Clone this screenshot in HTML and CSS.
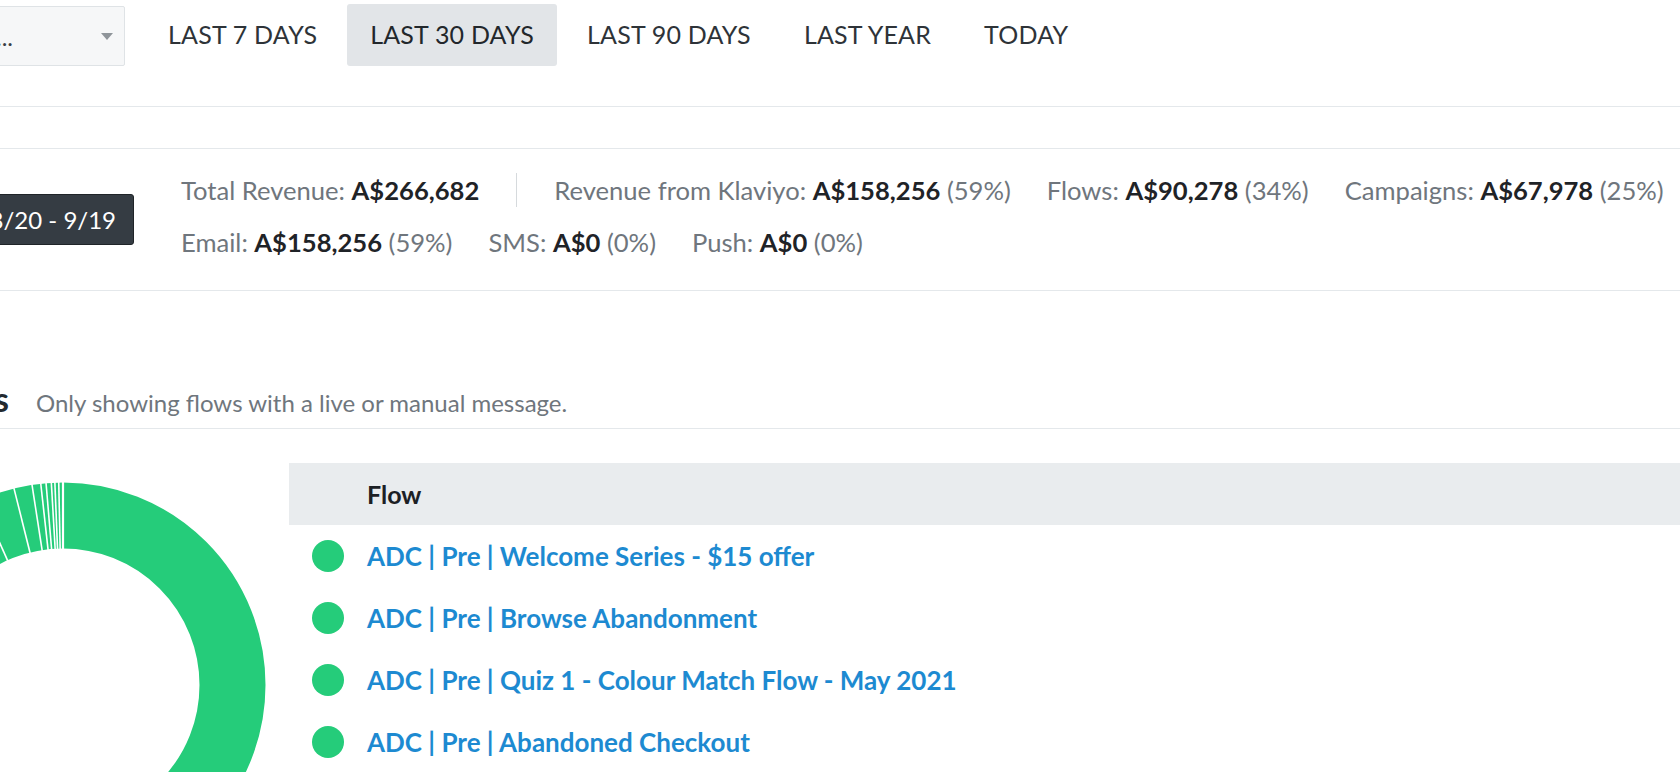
FILE: index.html
```html
<!DOCTYPE html>
<html lang="en">
<head>
<meta charset="utf-8">
<title>Flows overview</title>
<link rel="stylesheet" href="styles.css">
</head>
<body>
<div class="page">
  <header class="toolbar">
    <div class="select">
      <div class="select-label"><span>Overview by Channel...</span></div>
      <span class="caret"></span>
    </div>
    <nav class="tabs">
      <a class="tab">LAST 7 DAYS</a>
      <a class="tab active">LAST 30 DAYS</a>
      <a class="tab">LAST 90 DAYS</a>
      <a class="tab">LAST YEAR</a>
      <a class="tab">TODAY</a>
    </nav>
  </header>

  <section class="stats">
    <div class="stats-left">
      <div class="tip">8/20 - 9/19</div>
    </div>
    <div class="stats-body">
      <div class="stats-row">
        <span class="stat">Total Revenue: <b>A$266,682</b></span>
        <span class="sep"></span>
        <span class="stat">Revenue from Klaviyo: <b>A$158,256</b> (59%)</span>
        <span class="stat">Flows: <b>A$90,278</b> (34%)</span>
        <span class="stat">Campaigns: <b>A$67,978</b> (25%)</span>
      </div>
      <div class="stats-row">
        <span class="stat">Email: <b>A$158,256</b> (59%)</span>
        <span class="stat">SMS: <b>A$0</b> (0%)</span>
        <span class="stat">Push: <b>A$0</b> (0%)</span>
      </div>
    </div>
  </section>

  <section class="heading-row">
    <div class="heading-left"><h2 class="heading">Flows</h2></div>
    <p class="subtitle">Only showing flows with a live or manual message.</p>
  </section>

  <section class="flows">
    <div class="chart">
      <svg class="donut" width="410" height="410" viewBox="0 0 410 410">
        <circle cx="205" cy="205" r="169.5" fill="none" stroke="#25cc7a" stroke-width="66"/>
        <g stroke="#ffffff" stroke-width="1.6">
          <line x1="205" y1="70" x2="205" y2="0" stroke-width="2.2"/>
          <line x1="205" y1="70" x2="205" y2="0" transform="rotate(-1.2 205 205)"/>
          <line x1="205" y1="70" x2="205" y2="0" transform="rotate(-2.3 205 205)"/>
          <line x1="205" y1="70" x2="205" y2="0" transform="rotate(-3.3 205 205)"/>
          <line x1="205" y1="70" x2="205" y2="0" transform="rotate(-4.8 205 205)"/>
          <line x1="205" y1="70" x2="205" y2="0" transform="rotate(-6.3 205 205)"/>
          <line x1="205" y1="70" x2="205" y2="0" transform="rotate(-8.8 205 205)"/>
          <line x1="205" y1="70" x2="205" y2="0" transform="rotate(-14 205 205)"/>
          <line x1="205" y1="70" x2="205" y2="0" transform="rotate(-24 205 205)"/>
          <line x1="205" y1="70" x2="205" y2="0" transform="rotate(-45 205 205)"/>
          <line x1="205" y1="70" x2="205" y2="0" transform="rotate(-90 205 205)"/>
          <line x1="205" y1="70" x2="205" y2="0" transform="rotate(-150 205 205)"/>
        </g>
      </svg>
    </div>
    <div class="table">
      <div class="thead"><span class="th">Flow</span></div>
      <div class="trow"><span class="dot"></span><a class="flow-link">ADC | Pre | Welcome Series - $15 offer</a></div>
      <div class="trow"><span class="dot"></span><a class="flow-link">ADC | Pre | Browse Abandonment</a></div>
      <div class="trow"><span class="dot"></span><a class="flow-link">ADC | Pre | Quiz 1 - Colour Match Flow - May 2021</a></div>
      <div class="trow"><span class="dot"></span><a class="flow-link">ADC | Pre | Abandoned Checkout</a></div>
    </div>
  </section>
</div>
</body>
</html>
```

FILE: styles.css
```css
* { box-sizing: border-box; }

html, body {
  margin: 0;
  padding: 0;
  background: #ffffff;
  overflow: hidden;
}

body {
  font-family: "Lato", "Liberation Sans", sans-serif;
  font-size: 24px;
  color: #2e3338;
}

.page {
  margin-left: -200px;
  width: 1880px;
}

/* toolbar */
.toolbar {
  display: flex;
  align-items: flex-start;
  height: 107px;
  padding-top: 4px;
  border-bottom: 1px solid #e4e8eb;
}

.select {
  display: flex;
  align-items: center;
  width: 325px;
  height: 60px;
  margin-top: 2px;
  padding: 0 11px 0 14px;
  background: #f6f7f8;
  border: 1px solid #dfe3e6;
  border-radius: 2px;
}

.select-label {
  width: 198px;
  display: flex;
  justify-content: flex-end;
  overflow: hidden;
  white-space: nowrap;
  color: #3a3f44;
}

.caret {
  margin-left: auto;
  width: 0;
  height: 0;
  border-left: 6px solid transparent;
  border-right: 6px solid transparent;
  border-top: 7px solid #8f959a;
}

.tabs {
  display: flex;
  gap: 7px;
  margin-left: 20px;
}

.tab {
  display: block;
  height: 62px;
  line-height: 60px;
  padding: 0 23px;
  border-radius: 3px;
  font-size: 25px;
  color: #2e3338;
  letter-spacing: 0.2px;
  white-space: nowrap;
}

.tab.active {
  background: #e2e5e8;
  color: #22272b;
}

/* stats */
.stats {
  display: flex;
  align-items: center;
  margin-top: 41px;
  height: 143px;
  border-top: 1px solid #e4e8eb;
  border-bottom: 1px solid #e4e8eb;
}

.stats-left {
  width: 334px;
  display: flex;
  justify-content: flex-end;
}

.tip {
  height: 51px;
  line-height: 49px;
  padding: 0 17px 0 40px;
  background: #353c43;
  border: 1px solid #1f2428;
  border-radius: 3px;
  color: #ffffff;
  white-space: nowrap;
}

.stats-body {
  margin-left: 47px;
  padding-bottom: 7px;
  display: flex;
  flex-direction: column;
  font-size: 25.6px;
}

.stats-row {
  display: flex;
  align-items: center;
  gap: 36px;
  height: 52px;
  white-space: nowrap;
}

.stat {
  color: #6f767d;
}

.stat b {
  color: #1f2327;
  font-weight: 700;
}

.sep {
  width: 1px;
  height: 34px;
  margin-left: 1px;
  margin-right: 1px;
  background: #d6dadd;
}

/* heading */
.heading-row {
  display: flex;
  align-items: baseline;
  height: 138px;
  padding-top: 88px;
  border-bottom: 1px solid #e4e8eb;
}

.heading-left {
  width: 209px;
  display: flex;
  justify-content: flex-end;
}

.heading {
  margin: 0;
  font-size: 34px;
  line-height: 40px;
  font-weight: 700;
  color: #232a30;
}

.subtitle {
  margin: 0 0 0 27px;
  line-height: 30px;
  color: #6f767d;
}

/* flows table */
.flows {
  display: flex;
  align-items: flex-start;
}

.chart {
  width: 489px;
  flex: none;
  padding: 51px 0 0 58px;
}

.donut {
  display: block;
}

.table {
  flex: 1;
  margin-top: 34px;
}

.thead {
  height: 62px;
  display: flex;
  align-items: center;
  padding-left: 78px;
  background: #e9ecee;
}

.th {
  font-size: 25px;
  font-weight: 700;
  color: #1c2024;
}

.trow {
  height: 62px;
  display: flex;
  align-items: center;
  padding-left: 23px;
}

.dot {
  width: 32px;
  height: 32px;
  border-radius: 50%;
  background: #25cc7a;
  flex: none;
}

.flow-link {
  margin-left: 23px;
  font-size: 26px;
  color: #1d8ad1;
  font-weight: 700;
  white-space: nowrap;
}
```
